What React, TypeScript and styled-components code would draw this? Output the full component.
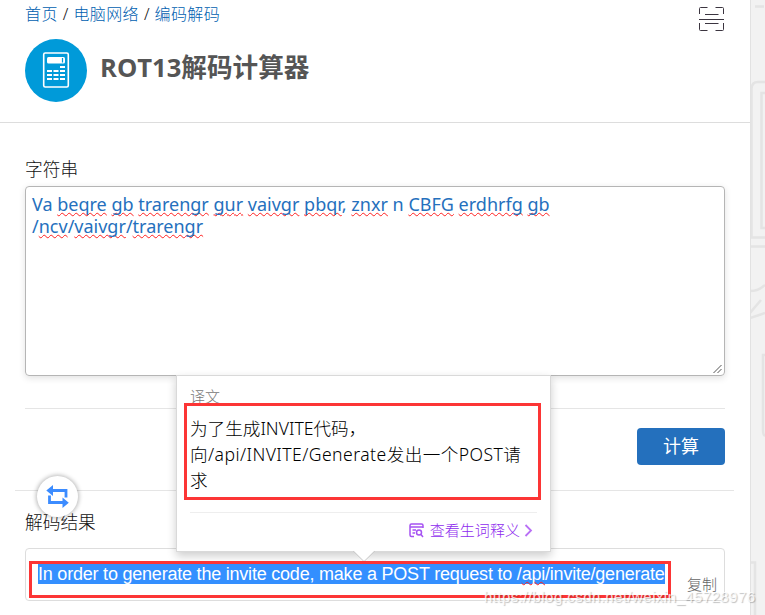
import React from 'react';
import styled, { createGlobalStyle } from 'styled-components';

const cjk = `'Noto Sans', 'Noto Sans CJK SC', sans-serif`;

const GlobalStyle = createGlobalStyle`
  * { box-sizing: border-box; }
  body { margin: 0; overflow: hidden; background: #f2f2f2; font-family: ${cjk}; }
`;

const Page = styled.div`
  position: relative;
  display: flex;
  width: 765px;
  height: 615px;
  overflow: hidden;
  background: #f2f2f2;
`;

const Content = styled.main`
  flex: none;
  width: 750px;
  height: 615px;
  background: #fff;
`;

const Pattern = styled.svg`
  display: block;
  flex: none;
`;

const Header = styled.header`
  height: 123px;
  padding: 3px 25px 0;
  border-bottom: 1px solid #ddd;
`;

const TopRow = styled.div`
  display: flex;
  justify-content: space-between;
  height: 36px;
`;

const Breadcrumb = styled.nav`
  display: flex;
  height: 22px;
  gap: 5px;
  font-size: 16px;
  font-weight: 300;
  line-height: 22px;
  color: #111;
`;

const Crumb = styled.a`
  color: #0060b0;
  letter-spacing: 0.4px;
`;

const ScanIcon = styled.svg`
  display: block;
  margin: 3px 1px 0 0;
`;

const TitleRow = styled.div`
  display: flex;
  align-items: center;
  height: 63px;
  gap: 13px;
`;

const Title = styled.h1`
  margin: 0 0 5px;
  font-family: 'Open Sans', 'Noto Sans CJK SC', sans-serif;
  font-size: 25.6px;
  line-height: 36px;
  font-weight: 700;
  color: #555;
  white-space: nowrap;
`;

const Form = styled.section`
  display: flex;
  flex-direction: column;
  padding: 34px 25px 0;
`;

const Label = styled.label`
  height: 29px;
  font-size: 17.7px;
  font-weight: 300;
  line-height: 25px;
  color: #111;
`;

const InputArea = styled.div`
  display: flex;
  flex-direction: column;
  justify-content: space-between;
  height: 190px;
  padding: 6px 1px 1px 6px;
  border: 1px solid #b5b5b5;
  border-radius: 4px;
  box-shadow: 0 2px 7px rgba(0, 0, 0, 0.12);
`;

const InputText = styled.p`
  margin: 0;
  font-family: 'Noto Sans', sans-serif;
  font-size: 18px;
  line-height: 22px;
  color: #2570bd;
  white-space: nowrap;
`;

const Misspelt = styled.span`
  text-decoration: underline wavy #ff2020 1px;
  text-decoration-skip-ink: none;
  text-underline-offset: 1px;
`;

const Line = styled.span`
  display: block;
`;

const Grip = styled.svg`
  display: block;
  align-self: flex-end;
`;

const Divider = styled.hr<{ $top: number; $wide?: boolean }>`
  width: ${(p) => (p.$wide ? 719 : 700)}px;
  height: 1px;
  margin: ${(p) => p.$top}px 0 0 ${(p) => (p.$wide ? -10 : 0)}px;
  border: 0;
  background: #e5e5e5;
`;

const Submit = styled.button`
  align-self: flex-end;
  width: 88px;
  height: 37px;
  margin-top: 19px;
  padding: 0;
  border: 0;
  border-radius: 4px;
  background: #2470bd;
  color: #fff;
  font-family: ${cjk};
  font-size: 18px;
  line-height: 37px;
`;

const ResultLabel = styled(Label)`
  height: 38px;
  margin-top: 19px;
`;

const ResultBox = styled.div`
  display: flex;
  justify-content: space-between;
  height: 53px;
  padding: 15px 7px 0 12px;
  border: 1px solid #ddd;
  border-radius: 4px;
`;

const Selected = styled.span`
  width: 627px;
  height: 20px;
  background: #338fff;
  color: #fff;
  font-family: 'Liberation Sans', sans-serif;
  font-size: 18px;
  line-height: 20px;
  letter-spacing: -0.215px;
  white-space: nowrap;
`;

const Copy = styled.a`
  height: 22px;
  margin-top: 9px;
  color: #666;
  font-size: 15px;
  font-weight: 300;
  line-height: 22px;
`;

const SwapBadge = styled.div`
  position: absolute;
  left: 37px;
  top: 476px;
  display: flex;
  align-items: center;
  justify-content: center;
  width: 41px;
  height: 41px;
  border-radius: 50%;
  background: #fff;
  box-shadow: 0 0 4px 1px rgba(0, 0, 0, 0.28);
`;

const Popup = styled.aside`
  position: absolute;
  left: 176px;
  top: 375px;
  width: 375px;
  height: 177px;
  padding: 8px 13px 0;
  border: 1px solid #d9d9d9;
  background: #fff;
  box-shadow: 0 4px 9px rgba(0, 0, 0, 0.2);
`;

const PopupHeading = styled.div`
  height: 31px;
  color: #777;
  font-size: 15px;
  font-weight: 300;
  line-height: 24px;
`;

const Translation = styled.p`
  height: 97px;
  margin: 0;
  color: #000;
  font-size: 17.6px;
  font-weight: 300;
  line-height: 26px;
  white-space: nowrap;
`;

const Spaced = styled.span`
  letter-spacing: 0.44px;
`;

const PopupFooter = styled.div`
  display: flex;
  align-items: center;
  justify-content: flex-end;
  height: 36px;
  padding-right: 4px;
  border-top: 1px solid #eee;
  color: #8e2bee;
  font-size: 15px;
  font-weight: 300;
`;

const FooterText = styled.span`
  margin: -3px 4px 0 6px;
  letter-spacing: 0.05px;
`;

const Pointer = styled.svg`
  position: absolute;
  left: 175px;
  top: 174px;
`;

const Highlight = styled.div<{ $x: number; $y: number; $w: number; $h: number }>`
  position: absolute;
  left: ${(p) => p.$x}px;
  top: ${(p) => p.$y}px;
  width: ${(p) => p.$w}px;
  height: ${(p) => p.$h}px;
  border: 3px solid #fc3535;
`;

const Watermark = styled.div`
  position: absolute;
  left: 484px;
  top: 587px;
  color: rgba(255, 255, 255, 0.8);
  font-family: 'Liberation Sans', sans-serif;
  font-size: 15px;
  line-height: 20px;
  letter-spacing: 0.44px;
  white-space: nowrap;
  text-shadow: 1px 1px 1px rgba(0, 0, 0, 0.25);
`;

const firstLine: [string, boolean][] = [
  ['Va', false], ['beqre', true], ['gb', true], ['trarengr', true], ['gur', true],
  ['vaivgr', true], ['pbqr', true], ['znxr', true], ['n', false], ['CBFG', true],
  ['erdhrfg', true], ['gb', true],
];

export default function App() {
  return (
    <Page>
      <GlobalStyle />
      <Content>
        <Header>
          <TopRow>
            <Breadcrumb>
              <Crumb>首页</Crumb><span>/</span><Crumb>电脑网络</Crumb><span>/</span><Crumb>编码解码</Crumb>
            </Breadcrumb>
            <ScanIcon width="25" height="25" viewBox="0 0 25 25" fill="none" stroke="#3b3540" strokeWidth="1">
              <path d="M.5 8V2.500Q.5 1.500 1.500 1.500H8.500M16.500 1.500H23.500Q24.500 1.500 24.500 2.500V8M.5 17V23.500Q.5 24.500 1.500 24.500H8.500M16.500 24.500H23.500Q24.500 24.500 24.500 23.500V17M6 8.500H19.500M0 13.500H25M6 17.500H19.500" />
            </ScanIcon>
          </TopRow>
          <TitleRow>
            <svg width="62" height="63" viewBox="0 0 62 63">
              <ellipse cx="31" cy="31.500" rx="31" ry="31.500" fill="#009ad9" />
              <rect x="18.700" y="14" width="24.600" height="34" rx="1.500" fill="none" stroke="#fff" strokeWidth="1.600" />
              <rect x="22" y="18" width="18" height="6.500" rx="1.500" fill="#fff" />
              <path d="M37.500 19V23.500" stroke="#009ad9" strokeWidth="1.200" />
              <path d="M35 28H40M22 32H27M28.500 32H33.500M35 32H40M22 36H27M28.500 36H33.500M35 36H40M22 40H27M28.500 40H33.500M35 40H40" stroke="#fff" strokeWidth="2" />
            </svg>
            <Title>ROT13解码计算器</Title>
          </TitleRow>
        </Header>
        <Form>
          <Label>字符串</Label>
          <InputArea>
            <InputText>
              <Line>
                {firstLine.map(([word, wrong], i) => (
                  <React.Fragment key={i}>
                    {wrong ? <Misspelt>{word}</Misspelt> : word}
                    {word === 'pbqr' ? ', ' : ' '}
                  </React.Fragment>
                ))}
              </Line>
              <Line>
                /<Misspelt>ncv</Misspelt>/<Misspelt>vaivgr</Misspelt>/<Misspelt>trarengr</Misspelt>
              </Line>
            </InputText>
            <Grip width="10" height="10" viewBox="0 0 10 10" stroke="#555" strokeWidth="1">
              <path d="M.5 9L8.500 1M4.500 9L8.500 5" />
            </Grip>
          </InputArea>
          <Divider $top={32} />
          <Submit>计算</Submit>
          <Divider $top={25} $wide />
          <ResultLabel>解码结果</ResultLabel>
          <ResultBox>
            <Selected>In order to generate the invite code, make a POST request to /<Misspelt>api</Misspelt>/invite/generate</Selected>
            <Copy>复制</Copy>
          </ResultBox>
        </Form>
      </Content>
      <Pattern width="15" height="615" viewBox="0 0 15 615" fill="none" stroke="#e4e4e4" strokeWidth="2.500">
        <path d="M5 6.500H14M1.500 238V89Q1.500 82 8 82H15M15 93H11.500V228H15M0 237.500H15M0 246.500H15M0 291Q8 291 15 285M0 313L11 300M0 318L15 313M15 355H13V430Q13 435 15 436M0 562.500H5V615" />
        <path d="M.5 0V615" stroke="#e2e2e2" strokeWidth="1" />
      </Pattern>
      <SwapBadge>
        <svg width="23" height="23" viewBox="0 0 23 23" fill="none" stroke="#3c8cff" strokeWidth="2.800">
          <path d="M6 5.500H20V12.500M17 17.500H3.500V10.500" />
          <path d="M7 0V11L.3 5.500ZM16.500 12.500V23L22.800 17.700Z" fill="#3c8cff" stroke="none" />
        </svg>
      </SwapBadge>
      <Popup>
        <PopupHeading>译文</PopupHeading>
        <Translation>为了生成INVITE代码，<br /><Spaced>向/api/INVITE/Generate发出一个POST请</Spaced><br />求</Translation>
        <PopupFooter>
          <svg width="15" height="15" viewBox="0 0 15 15" fill="none" stroke="#a653f2" strokeWidth="1.500">
            <path d="M5 13.500H2.500Q1 13.500 1 12V2.500Q1 1 2.500 1H12.500Q14 1 14 2.500V5M1 4H14M3.500 7H7M3.500 10H6" />
            <circle cx="10" cy="9.500" r="2.500" /><path d="M12 11.500L14 14" />
          </svg>
          <FooterText>查看生词释义</FooterText>
          <svg width="9" height="13" viewBox="0 0 9 13" fill="none" stroke="#b970f5" strokeWidth="1.800"><path d="M1.500 1L7 6.500L1.500 12" /></svg>
        </PopupFooter>
        <Pointer width="24" height="13" viewBox="0 0 24 13">
          <path d="M1 0H23L12 11Z" fill="#fff" /><path d="M1 1L12 11.500L23 1" fill="none" stroke="#ccc" />
        </Pointer>
      </Popup>
      <Highlight $x={184} $y={403} $w={357} $h={97} />
      <Highlight $x={29} $y={561} $w={642} $h={37} />
      <Watermark>https://blog.csdn.net/weixin_45728976</Watermark>
    </Page>
  );
}
